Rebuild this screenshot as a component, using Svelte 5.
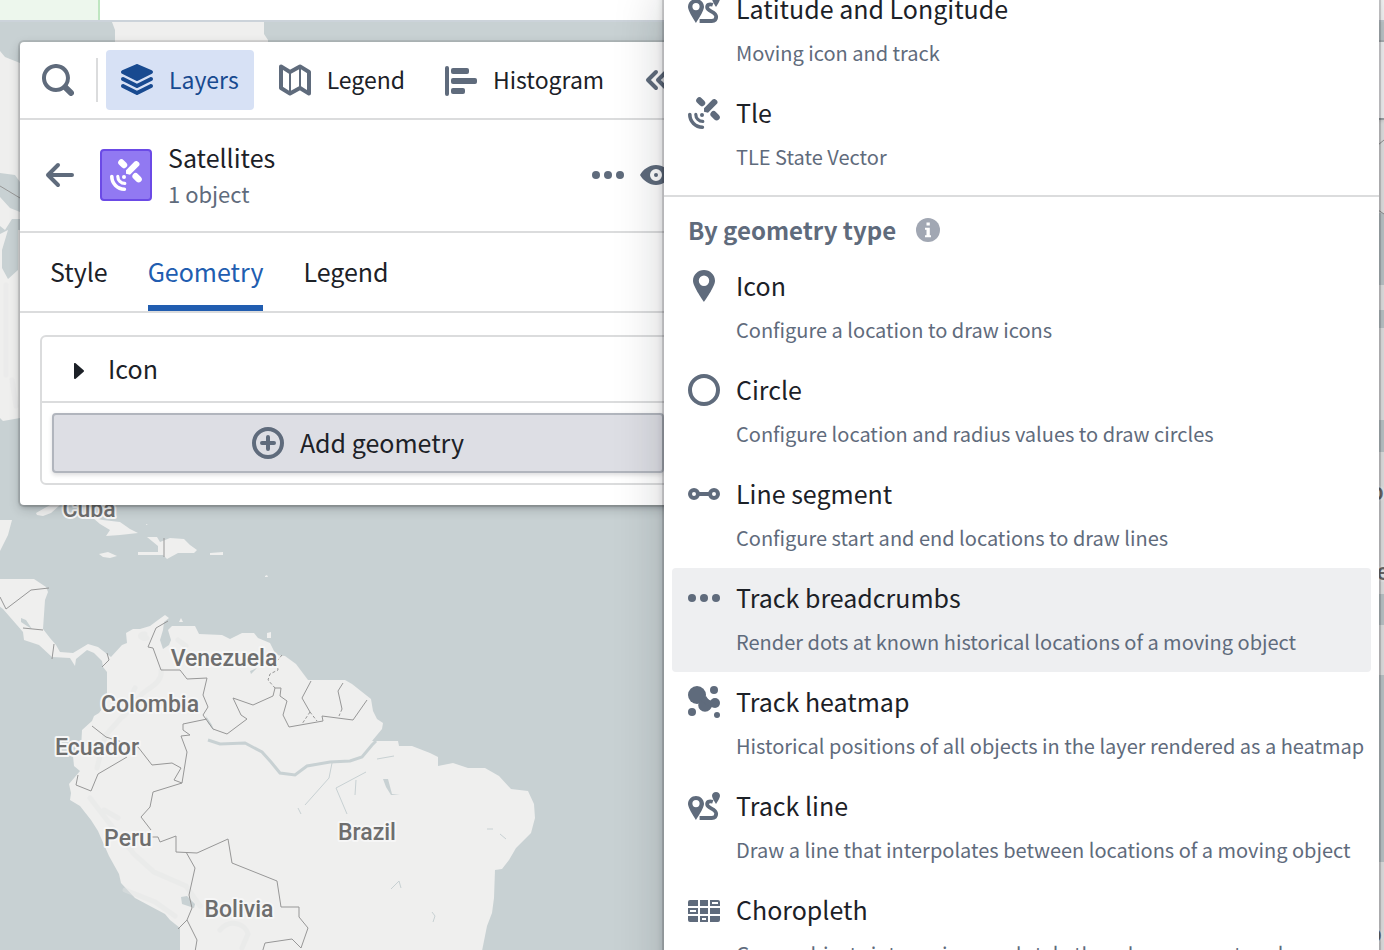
<script lang="ts">
    type Item = { icon: string; title: string; text: string };

    const icons: Record<string, string> = {
        search: '<path d="M15.55 13.43l-2.67-2.68a6.94 6.94 0 001.11-3.76c0-3.87-3.13-7-7-7s-7 3.13-7 7 3.13 7 7 7c1.39 0 2.68-.42 3.76-1.11l2.68 2.67a1.498 1.498 0 102.12-2.12zm-8.56-1.44c-2.76 0-5-2.24-5-5s2.24-5 5-5 5 2.24 5 5-2.24 5-5 5z"/>',
        layers: '<path d="M.55 4.89l7 3.5c.14.07.29.11.45.11s.31-.04.45-.11l7-3.5a.998.998 0 00-.06-1.81L8.4.08a1.006 1.006 0 00-.79 0l-6.99 3a.992.992 0 00-.07 1.81zM15 10c-.16 0-.31.04-.45.11L8 13.38 1.45 10.11c-.14-.07-.29-.11-.45-.11-.55 0-1 .45-1 1 0 .39.23.73.55.89l7 3.5c.14.07.29.11.45.11s.31-.04.45-.11l7-3.5c.32-.16.55-.5.55-.89 0-.55-.45-1-1-1zm0-3.5c-.16 0-.31.04-.45.11L8 9.88 1.45 6.61A.997.997 0 001 6.5c-.55 0-1 .45-1 1 0 .39.23.73.55.89l7 3.5c.14.07.29.11.45.11s.31-.04.45-.11l7-3.5c.32-.16.55-.5.55-.89 0-.55-.45-1-1-1z"/>',
        map: '<path d="M1 1.2L5.5 4 10.5 1.2 15 4v10.8L10.5 12l-5 2.8L1 12z" fill="none" stroke="currentColor" stroke-width="2" stroke-linejoin="round"/><path d="M5.5 4v11M10.5 1v11" fill="none" stroke="currentColor"/>',
        histogram: '<rect y="1" width="2" height="15" rx="1"/><rect x="3" y="2" width="9" height="3" rx="1"/><rect x="3" y="7" width="13" height="3" rx="1"/><rect x="3" y="12" width="7" height="3" rx="1"/>',
        collapse: '<path d="M8 4L4 8l4 4M13 4L9 8l4 4" fill="none" stroke="currentColor" stroke-width="2" stroke-linecap="round" stroke-linejoin="round"/>',
        back: '<path d="M7 3L2 8l5 5M2 8h12" fill="none" stroke="currentColor" stroke-width="2" stroke-linecap="round" stroke-linejoin="round"/>',
        more: '<circle cx="2" cy="8" r="2"/><circle cx="8" cy="8" r="2"/><circle cx="14" cy="8" r="2"/>',
        eye: '<path fill-rule="evenodd" d="M0 8c1.6-2.8 4.6-5 8-5s6.4 2.2 8 5c-1.6 2.8-4.6 5-8 5S1.6 10.8 0 8zm8 3a3 3 0 100-6 3 3 0 000 6z"/><circle cx="8" cy="8" r="1"/>',
        caret: '<path d="M11 8c0-.15-.07-.28-.17-.37l-4-3.5A.495.495 0 006 4.5v7a.495.495 0 00.83.37l4-3.5c.1-.09.17-.22.17-.37z"/>',
        add: '<g fill="none" stroke="currentColor" stroke-width="2"><circle cx="8" cy="8" r="7"/><path d="M8 5v6M5 8h6" stroke-linecap="round"/></g>',
        satellite: '<g fill="none" stroke="currentColor" stroke-linecap="round"><path d="M5.7 1.7l1.3 1.3M12.8 8.600l1.500 1.500" stroke-width="3.2"/><path d="M.9 8.800a6.300 6.300 0 006.300 6.300" stroke-width="1.8"/><path d="M3.9 8.700a3.500 3.500 0 003.500 3.500" stroke-width="1.6"/></g><path d="M12.300 1.300c1-1 3.200.8 2.300 2L10 7.900 8 7.400V5.600z"/><circle cx="7" cy="9" r="1"/>',
        marker: '<path d="M8 0C4.960 0 2.500 2.390 2.500 5.370 2.500 8.360 8 16 8 16s5.500-7.640 5.500-10.630C13.500 2.390 11.040 0 8 0zm0 8a2.600 2.600 0 110-5.200A2.600 2.600 0 018 8z"/>',
        circle: '<circle cx="8" cy="8" r="7" fill="none" stroke="currentColor" stroke-width="2"/>',
        segment: '<g fill="none" stroke="currentColor" stroke-width="2"><circle cx="3" cy="8" r="2"/><circle cx="13" cy="8" r="2"/><path d="M5 8h6"/></g>',
        heatmap: '<circle cx="4.5" cy="4.5" r="4.5"/><circle cx="8.500" cy="9.500" r="3.400"/><circle cx="13.500" cy="8.500" r="2.500"/><circle cx="13" cy="2" r="2"/><circle cx="2" cy="13" r="2"/><circle cx="14.500" cy="14.500" r="1.500"/><path d="M6 7l3-2 1.500 2.200H13v3.400h-2z"/>',
        route: '<path fill-rule="evenodd" d="M4 3C1.800 3 0 4.700 0 6.900 0 9.200 4 15 4 15s4-5.800 4-8.100C8 4.700 6.200 3 4 3zm0 5.600a1.800 1.800 0 110-3.600 1.800 1.800 0 010 3.600z"/><path d="M14 1c-1.100 0-2 .8-2 1.900C12 4.100 14 7 14 7s2-2.900 2-4.100C16 1.800 15.100 1 14 1z"/><path d="M12.400 5.900C10.600 5.300 9.400 5.900 9.600 7.400c.2 1.800 4.500 1.900 4.500 4.500 0 1.600-1 2.100-2.200 2.100H5.800" fill="none" stroke="currentColor" stroke-width="1.9"/>',
        grid: '<path fill-rule="evenodd" d="M1 3h4v3H0V4a1 1 0 011-1zM6 3h4v3H6zM11 3h4a1 1 0 011 1v2h-5zm1 1v1h3V4zM0 7h5v3H0zm1 1v1h3V8zM6 7h4v3H6zM11 7h5v3h-5zM0 11h5v3H1a1 1 0 01-1-1zM6 11h4v3H6zm1 1v1h2v-1zM11 11h5v2a1 1 0 01-1 1h-4z"/>',
        info: '<circle cx="8" cy="8" r="8"/><path fill="#fff" d="M7 3h2.200v2H7zM6 6.500h3.200v5H10v1.300H6v-1.300h1v-3.700H6z"/>'
    };

    const sources: Item[] = [
        { icon: 'route', title: 'Latitude and Longitude', text: 'Moving icon and track' },
        { icon: 'satellite', title: 'Tle', text: 'TLE State Vector' }
    ];

    const geometries: Item[] = [
        { icon: 'marker', title: 'Icon', text: 'Configure a location to draw icons' },
        { icon: 'circle', title: 'Circle', text: 'Configure location and radius values to draw circles' },
        { icon: 'segment', title: 'Line segment', text: 'Configure start and end locations to draw lines' },
        { icon: 'more', title: 'Track breadcrumbs', text: 'Render dots at known historical locations of a moving object' },
        { icon: 'heatmap', title: 'Track heatmap', text: 'Historical positions of all objects in the layer rendered as a heatmap' },
        { icon: 'route', title: 'Track line', text: 'Draw a line that interpolates between locations of a moving object' },
        { icon: 'grid', title: 'Choropleth', text: 'Group objects into regions and style them by a property value' }
    ];

    const tools = [
        { icon: 'layers', label: 'Layers' },
        { icon: 'map', label: 'Legend' },
        { icon: 'histogram', label: 'Histogram' }
    ];
    const tabs = ['Style', 'Geometry', 'Legend'];

    const places = [
        { name: 'Cuba', x: 89, y: 517 },
        { name: 'Venezuela', x: 224, y: 666 },
        { name: 'Colombia', x: 150, y: 712 },
        { name: 'Ecuador', x: 97, y: 755 },
        { name: 'Peru', x: 128, y: 846 },
        { name: 'Brazil', x: 367, y: 840 },
        { name: 'Bolivia', x: 239, y: 917 },
        { name: 'o', x: 1377, y: 500 },
        { name: 'e', x: 1383, y: 580 },
        { name: 'o', x: 1375, y: 942 }
    ];

    let activeTool = $state('Layers');
    let activeTab = $state('Geometry');
    let highlighted = $state('Track breadcrumbs');
</script>

{#snippet icon(name: string)}
    <svg class="icon" viewBox="0 0 16 16" aria-hidden="true">{@html icons[name]}</svg>
{/snippet}

{#snippet menuItem(item: Item)}
    <li>
        <button
            class="menu-item"
            class:highlighted={highlighted === item.title}
            onmouseenter={() => (highlighted = item.title)}
        >
            {@render icon(item.icon)}
            <span class="menu-text">
                <span class="menu-title">{item.title}</span>
                <span class="menu-sub">{item.text}</span>
            </span>
        </button>
    </li>
{/snippet}

<div class="app">
    <header class="topbar"><div class="topbar-tag"></div></header>

    <main class="workspace">
        <svg class="map" viewBox="0 22 1384 928" preserveAspectRatio="xMinYMin slice" role="img" aria-label="Map">
            <g class="land">
                <path d="M112 22l3 8v14h153v-4l-4-6V22z" />
                <path d="M0 51l5 6 15 6h12v112l-12 7-5-7-15-2zM0 197l10 11 10 4v7h-8l-7 11-5-4zM0 234l8-4-6 20v18l6 11 10-9v-40h14v188H20l-17 3-3-3z" />
                <path d="M0 520h12L8 535l-5 10-3 6zM36 513l14-8h10l-9 8-8 3-6-1zM93 518l10 2 17 2 10 7 8 4-18 2-14 1 4-6-10-6z" />
                <path d="M147 537l10 0 3 5 10-4 14 1 6 6 7 5-3 3h-16l-11 6-4-4h-25v-3h20v-6zM99 554l9-2 9 4-7 2-7-1zM210 553l13-1v3h-13zM267 633l4-1v6h-4zM181 618l2 4h-4zM146 524l2 1h-2zM265 576l2-1 1 2h-3z" />
                <path d="M0 579h34l12 8 2 5-3 8-2 29 7 9 6 7 4 7 13 1 15-9 10 3 9 7 4 3 11-12 5-2-1-10 7-4h7l10-3 8-6 7-5 4 3-5 4-1 8-3 10 3 9 6-4 2-5-3-10 4-4h23l4 8 23 1 8 4 12-6h12l4 5 12 5 6 12 9 1 11 8 12 16h37l7 4 19 15 2 12 4 8 6 4-1 6-10 12h26l1 5h13l18 7 8 4v9l15-3 15 5h17l14 8 12 13 17 2 6 13 1 14-4 15-15 15-7 12-7 9-7 1-1 28-2 15-5 13-6 30H180v-28l-10-8-5-6-30-16-14-15-2-9-10-18-11-25-7-11-11-14-10-6 1-7-2-9 11-13-6-5-1-10 8-7 1-19 10-9 2-5 5-3 8-11v-30l-4-5-1-6-8-8-7-3-11 9-1 7-5-8-18-1-13-12-15-5-1-8-20-23-4-3z" />
                <path d="M1370 120h14v93h-14zM1370 285h14v25h-14zM1370 328h14v92h-14zM1370 452h14v142h-14zM1370 625h14v50h-14zM1370 862h14v88h-14z" />
            </g>
            <g class="relief">
                <path d="M145 634c-8 0-4 6 2 4M161 670c2 10-8 16-14 20s-14 12-12 20M135 688c-6 10-2 22-14 30l-16 18-8 32" />
                <path d="M90 798l20 26 24 30 20 18 32 14 14 20M125 890l30 12 20 14M220 930c10-12 26-6 28 4l-6 14M104 810l14 8" />
                <path d="M178 640l8 6M6 285v90M12 380l4 26" />
            </g>
            <g class="water">
                <path d="M208 740l12 4 25-1 17 9 9 10 9 11 15 2 12-9 23-4 20-1 12-4 10-12 4-4" />
                <path class="thin" d="M332 763l-3 15-24 27M366 772l-30 16 11 26M356 780l-1 15M298 808l3 6M377 759l17-3M487 829l6 0M500 834l6 5M391 889l8-8 2 7M432 912l3 4-2 6" />
                <path class="filled" d="M383 779h5l4 15 8 1h-9l-5-8zM181 897l6-1 8 8-1 4-12-4zM206 716l6 9 2 6-6-8zM250 671l7-3-6 6zM21 618l5 2 6 9-5-3-6-4z" />
            </g>
            <g class="borders">
                <path d="M0 186l20 12M0 597l6 12 25-19 18-2M23 628l20 2M54 644l-2 15M107 653l2 7-7 7M164 538v19" />
                <path d="M168 621l-12 7-8 19 5 1 8 22h19l7 9 20-1-4 17 5 12-5 8 10 14 14 5 20-15-6-4-8-17 20 7 20-9 2-8h6l-1 8 7 5-4 14 6 12 34-6-1-5 31 4 14-20M311 681l-9 17 8 14M343 683l-5 8 4 18" />
                <path d="M207 719l-24 5v6l7 5-9 1 6 16-5 31-29 9-3 15-9 10 10 13M92 726l14 11 32 10 14 18 20-2 9 5-7 12 8 3M78 775l-2 10 15 6 7-17 29-17" />
                <path d="M151 837h7l2 5 16-6v16l21 1 31-14 4 24 45 18 4 26h18v10l9 11-7 20-9-9-27 4-3 10M186 852l9 16-6 27 3 13-5 12-9 9M187 920l10 20-2 12M1378 145l6-5M1378 210l6 4" />
                <path class="dashed" d="M282 655l-5 6 1 9-8 4-2 6 7 8M310 712l-8 12M310 712l7 9M342 709l-3 7" />
            </g>
            {#each places as place}
                <text x={place.x} y={place.y}>{place.name}</text>
            {/each}
        </svg>

        <div class="side-toolbar"></div>

        <section class="panel">
            <div class="toolbar">
                <button class="search" aria-label="Search">{@render icon('search')}</button>
                {#each tools as tool}
                    <button
                        class="tool"
                        class:active={activeTool === tool.label}
                        onclick={() => (activeTool = tool.label)}
                    >
                        {@render icon(tool.icon)}
                        <span class="label">{tool.label}</span>
                    </button>
                {/each}
                <button class="end" aria-label="Collapse panel">{@render icon('collapse')}</button>
            </div>

            <div class="layer-header">
                <button aria-label="Back">{@render icon('back')}</button>
                <div class="layer-tile">{@render icon('satellite')}</div>
                <div class="layer-name">
                    <span>Satellites</span>
                    <span class="layer-count">1 object</span>
                </div>
                <button class="end" aria-label="More actions">{@render icon('more')}</button>
                <button aria-label="Toggle visibility">{@render icon('eye')}</button>
            </div>

            <div class="tabs" role="tablist">
                {#each tabs as tab}
                    <button
                        class="tab"
                        role="tab"
                        class:active={activeTab === tab}
                        aria-selected={activeTab === tab}
                        onclick={() => (activeTab = tab)}
                    >
                        <span class="label">{tab}</span>
                    </button>
                {/each}
            </div>

            <div class="card">
                <button class="card-row">
                    {@render icon('caret')}
                    <span class="label">Icon</span>
                </button>
                <div class="card-footer">
                    <button class="add">
                        {@render icon('add')}
                        <span class="label">Add geometry</span>
                    </button>
                </div>
            </div>
        </section>
    </main>

    <div class="popover">
        <ul>
            {#each sources as item}
                {@render menuItem(item)}
            {/each}
        </ul>
        <h2>By geometry type <span class="info">{@render icon('info')}</span></h2>
        <ul>
            {#each geometries as item}
                {@render menuItem(item)}
            {/each}
        </ul>
    </div>
</div>

<style>
    :global(body) {
        margin: 0;
    }

    .app {
        position: relative;
        display: flex;
        flex-direction: column;
        height: 100vh;
        overflow: hidden;
        font-family: "Noto Sans CJK SC", "Noto Sans", sans-serif;
        font-size: 25px;
        color: #1c2127;
    }

    button {
        display: flex;
        align-items: center;
        padding: 0;
        border: 0;
        background: none;
        font: inherit;
        color: inherit;
        text-align: left;
        cursor: pointer;
    }

    .label {
        padding-bottom: 2px;
    }

    .icon {
        display: block;
        flex: none;
        width: 32px;
        height: 32px;
        fill: currentColor;
        color: #5f6b7c;
    }

    .topbar {
        display: flex;
        flex: none;
        height: 20px;
        background: #fff;
        border-bottom: 2px solid #ccd3da;
    }

    .topbar-tag {
        width: 98px;
        background: #edf7ed;
        border-right: 2px solid #bfe6c1;
    }

    .workspace {
        position: relative;
        flex: 1;
        min-height: 0;
        padding: 20px;
        background: #c8d1d3;
    }

    .map {
        position: absolute;
        inset: 0;
        width: 100%;
        height: 100%;
    }

    .land {
        fill: #efefee;
    }

    .relief {
        fill: none;
        stroke: #e5e6e6;
        stroke-width: 5;
        stroke-linecap: round;
        opacity: 0.4;
    }

    .water {
        fill: none;
        stroke: #c8d1d3;
        stroke-width: 3;
    }

    .water .thin {
        stroke-width: 1;
    }

    .water .filled {
        fill: #c8d1d3;
        stroke: none;
    }

    .borders {
        fill: none;
        stroke: #979797;
        stroke-width: 1;
    }

    .borders .dashed {
        stroke-dasharray: 3 2;
    }

    .map text {
        font-family: Roboto, sans-serif;
        font-size: 23px;
        font-weight: 500;
        text-anchor: middle;
        fill: #6e6e6e;
        stroke: #f6f6f6;
        stroke-width: 4px;
        stroke-linejoin: round;
        paint-order: stroke;
    }

    .side-toolbar {
        position: absolute;
        top: 20px;
        right: 0;
        width: 60px;
        height: 76px;
        background: #fff;
        box-shadow: 0 0 0 2px rgba(17, 20, 24, 0.1), 0 2px 4px rgba(17, 20, 24, 0.2);
    }

    .panel {
        position: relative;
        box-sizing: border-box;
        width: 676px;
        max-width: 100%;
        padding-bottom: 20px;
        background: #fff;
        border-radius: 4px;
        box-shadow: 0 0 0 2px rgba(17, 20, 24, 0.1), 0 2px 4px rgba(17, 20, 24, 0.2), 0 4px 12px rgba(17, 20, 24, 0.2);
    }

    .toolbar {
        display: flex;
        align-items: center;
        gap: 10px;
        height: 76px;
        padding-right: 24px;
        border-bottom: 2px solid #dbdcdd;
    }

    .search {
        height: 44px;
        padding: 0 22px;
        border-right: 2px solid #dbdcdd;
        margin-right: -2px;
    }

    .tool {
        gap: 16px;
        height: 60px;
        padding: 0 15px;
        border-radius: 4px;
        font-size: 23px;
    }

    .tool.active {
        background: #d7e1f5;
        color: #184a90;
    }

    .tool.active .icon {
        color: #184a90;
    }

    .end {
        margin-left: auto;
    }

    .layer-header {
        display: flex;
        align-items: center;
        gap: 16px;
        height: 110px;
        padding: 0 24px 1px;
        border-bottom: 2px solid #dbdcdd;
    }

    .layer-tile {
        display: grid;
        place-items: center;
        width: 48px;
        height: 48px;
        margin-left: 8px;
        background: #9179f2;
        border: 2px solid #6b4ae6;
        border-radius: 4px;
    }

    .layer-tile .icon {
        color: #fff;
    }

    .layer-name {
        display: flex;
        flex-direction: column;
        line-height: 36px;
    }

    .layer-count {
        font-size: 22px;
        color: #5f6b7c;
    }

    .tabs {
        display: flex;
        gap: 40px;
        height: 78px;
        padding: 0 30px;
        border-bottom: 2px solid #dbdcdd;
    }

    .tab {
        border-top: 6px solid transparent;
        border-bottom: 6px solid transparent;
    }

    .tab.active {
        color: #215db0;
        border-bottom-color: #215db0;
    }

    .card {
        margin: 22px 20px 0;
        border: 2px solid #dbdcdd;
        border-radius: 6px;
    }

    .card-row {
        gap: 14px;
        width: 100%;
        height: 66px;
        padding-left: 20px;
        border-bottom: 2px solid #dbdcdd;
    }

    .card-row .icon {
        margin-top: 3px;
        color: #1c2127;
    }

    .card-footer {
        padding: 10px;
    }

    .add {
        justify-content: center;
        gap: 16px;
        width: 100%;
        height: 60px;
        background: #dddee4;
        border: 2px solid #b1b5bd;
        border-radius: 4px;
        box-shadow: 0 2px 4px rgba(17, 20, 24, 0.15);
    }

    .popover {
        position: absolute;
        top: -21px;
        right: 5px;
        bottom: -40px;
        left: 664px;
        background: #fff;
        overflow: hidden;
        box-shadow: 0 0 0 2px rgba(17, 20, 24, 0.15), 0 4px 8px rgba(17, 20, 24, 0.2), 0 16px 48px rgba(17, 20, 24, 0.2);
    }

    ul {
        margin: 0;
        padding: 0 8px;
        list-style: none;
    }

    h2 {
        display: flex;
        align-items: center;
        gap: 20px;
        margin: 8px 0 0;
        padding: 11px 24px 4px;
        border-top: 2px solid #dbdcdd;
        font-size: 24px;
        font-weight: 700;
        line-height: 44px;
        color: #5f6b7c;
    }

    .info .icon {
        width: 24px;
        height: 24px;
        color: #a1a7b3;
    }

    .menu-item {
        align-items: flex-start;
        gap: 16px;
        width: 100%;
        padding: 8px 16px;
        border-radius: 4px;
    }

    .menu-item .icon {
        margin-top: 6px;
    }

    .menu-item.highlighted {
        background: #eeeff1;
    }

    .menu-text {
        display: flex;
        flex-direction: column;
        gap: 2px;
        white-space: nowrap;
    }

    .menu-title {
        line-height: 42px;
    }

    .menu-sub {
        font-size: 20px;
        line-height: 44px;
        color: #5f6b7c;
    }
</style>
